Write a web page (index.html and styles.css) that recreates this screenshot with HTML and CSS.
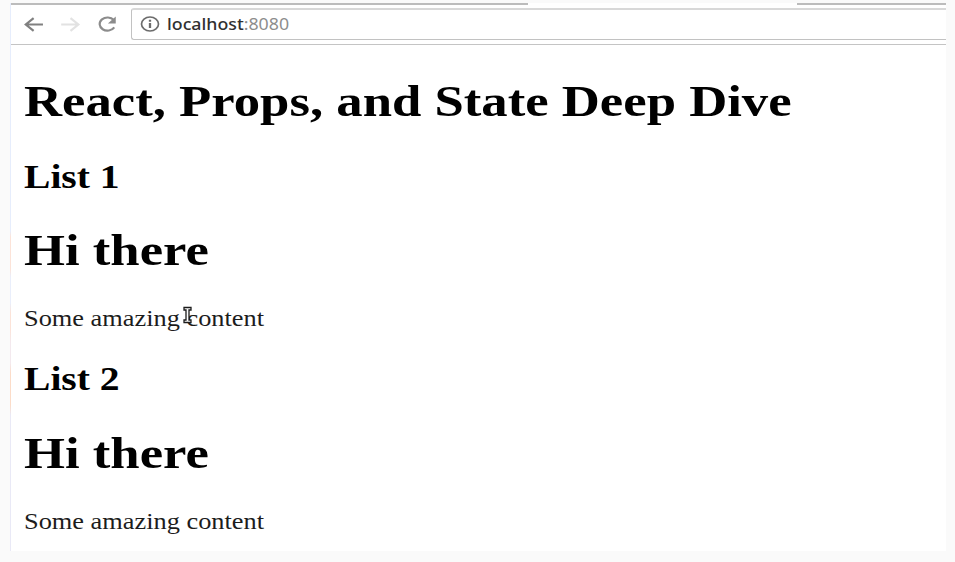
FILE: index.html
```html
<!DOCTYPE html>
<html lang="en">
<head>
<meta charset="utf-8">
<title>localhost:8080</title>
<link rel="stylesheet" href="styles.css">
</head>
<body>
<div class="window">
  <div class="tabstrip"><span class="edge edge-left"></span><span class="edge edge-right"></span></div>
  <header class="toolbar">
    <svg class="nav" width="122" height="40" viewBox="0 0 122 40" fill="none" stroke-width="2.200">
      <path d="M32.500 20.500H15M23 14L15 20.500L23 27" stroke="#808080"/>
      <path d="M51 20.500H68M60.500 14L68.500 20.500L60.500 27" stroke="#e2e2e2"/>
      <path d="M104.500 16A8 6.700 0 1 0 105 23.500" stroke="#8c8c8c"/>
      <path d="M106.500 12.500V19.500H98.500Z" fill="#8c8c8c"/>
    </svg>
    <div class="address">
      <svg class="info" width="20" height="18" viewBox="0 0 20 18" fill="none" stroke="#6c6c6c">
        <ellipse cx="10" cy="9" rx="8.500" ry="7" stroke-width="1.700"/>
        <path d="M10 8V13M10 4.800V6.700" stroke-width="2.300"/>
      </svg>
      <span class="url"><span class="host">localhost</span>:8080</span>
    </div>
  </header>
  <main class="page">
    <div class="content">
      <h1>React, Props, and State Deep Dive</h1>
      <section>
        <h2>List 1</h2>
        <h1>Hi there</h1>
        <p>Some amazing content</p>
      </section>
      <section>
        <h2>List 2</h2>
        <h1>Hi there</h1>
        <p>Some amazing content</p>
      </section>
    </div>
  </main>
</div>
<svg class="cursor" width="9" height="19" viewBox="0 0 9 19">
  <path d="M1 1.500H8V4H6V14H8V16.500H1V14H3V4H1Z" fill="#fff" stroke="#1c1c1c" stroke-width="1.300"/>
</svg>
</body>
</html>
```
FILE: styles.css
```css
* { box-sizing: border-box; }
body {
  margin: 0;
  height: 562px;
  padding: 3px 9px 11px 10px;
  background: #fafafa;
  overflow: hidden;
}
.window {
  height: 548px;
  padding-left: 1px;
  background:
    linear-gradient(#e6edfc 0 228px, #fce3d8 234px 266px, #e9eefb 274px 300px, #fce3d8 310px 326px, #f3e9ee 340px 360px, #fcdcc8 370px 402px, #e9e9f6 412px) 0 0 / 1px 100% no-repeat,
    #fff;
  overflow: hidden;
}
.tabstrip {
  display: flex;
  justify-content: space-between;
  height: 2px;
}
.edge {
  height: 1.5px;
  background: #bcbcbc;
}
.edge-left { width: 517px; }
.edge-right { width: 149px; }
.toolbar {
  display: flex;
  height: 40px;
  border-bottom: 1.5px solid #c4c4c4;
}
.nav {
  flex: none;
  width: 120px;
  margin-top: -1px;
}
.address {
  display: flex;
  flex: 1;
  align-items: center;
  height: 32px;
  margin-top: 3px;
  padding: 0 0 2px 8px;
  border: 1px solid #c2c2c2;
  border-top: 2px solid #d8d8d8;
  border-right: 0;
  border-radius: 3px 0 0 3px;
}
.info { flex: none; }
.url {
  margin-left: 7px;
  font: 15.5px/24px "Noto Sans", sans-serif;
  color: #8d8d8d;
  transform: scaleX(1.145);
  transform-origin: 0 50%;
}
.host {
  color: #303030;
  font-weight: 500;
}
.page { padding: 30px 0 0 12.6px; }
.content {
  width: 760px;
  font-family: "Liberation Serif", serif;
  font-size: 22.25px;
  color: #000;
  transform: scaleX(1.1845);
  transform-origin: 0 0;
}
h1, h2, p { margin: 0; }
h1 { font-size: 44.5px; line-height: 52px; }
h2 { font-size: 33.4px; line-height: 38px; }
p { line-height: 26px; color: #1c1c1c; }
section { padding-top: 31px; }
section h1 { margin: 28px 0 30px; }
section + section { padding-top: 28px; }
section + section h1 { margin-top: 29px; }
.cursor {
  position: absolute;
  left: 183px;
  top: 306px;
}
```
